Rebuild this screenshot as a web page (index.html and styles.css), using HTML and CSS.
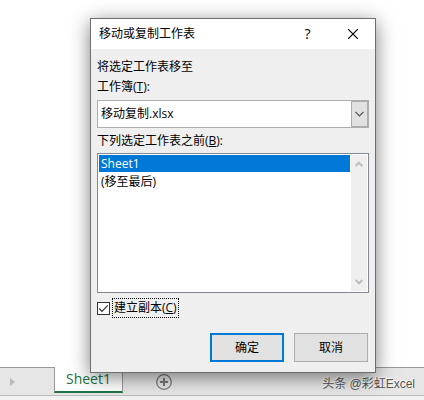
FILE: index.html
```
<!DOCTYPE html>
<html lang="zh-CN">
<head>
    <meta charset="UTF-8">
    <meta name="viewport" content="width=device-width, initial-scale=1.0">
    <title>移动或复制工作表</title>
    <link rel="stylesheet" href="styles.css">
</head>
<body>
    <div class="sheet"></div>
    <div class="tabs">
        <svg class="tab-arrow" width="5" height="8" viewBox="0 0 5 8"><path d="M0 0L5 4L0 8Z" fill="#b9b9b9"/></svg>
        <button class="tab">Sheet1</button>
        <button class="add" aria-label="新工作表">
            <svg width="16" height="16" viewBox="0 0 16 16" fill="none" stroke="#777">
                <circle cx="8" cy="8" r="7.3" stroke-width="1.2"/>
                <path d="M8 4V12M4 8H12" stroke-width="2"/>
            </svg>
        </button>
        <span class="credit">头条 @彩虹Excel</span>
    </div>
    <div class="status"></div>

    <form class="dialog" role="dialog" aria-labelledby="title">
        <div class="titlebar">
            <span class="title" id="title">移动或复制工作表</span>
            <button type="button" class="caption" aria-label="帮助">?</button>
            <button type="button" class="caption" aria-label="关闭">
                <svg width="10" height="10" viewBox="0 0 10 10"><path d="M0 0L10 10M10 0L0 10" stroke="#000" stroke-width="1.2"/></svg>
            </button>
        </div>
        <div class="content">
            <div class="line">将选定工作表移至</div>
            <label class="line" for="book">工作簿(<u>T</u>):</label>
            <div class="combo">
                <select id="book">
                    <option>移动复制.xlsx</option>
                </select>
                <span class="drop">
                    <svg width="9" height="6" viewBox="0 0 9 6" fill="none" stroke="#505050" stroke-width="1.2"><path d="M0.5 0.8L4.5 4.8L8.5 0.8"/></svg>
                </span>
            </div>
            <label class="line before" for="before">下列选定工作表之前(<u>B</u>):</label>
            <div class="list">
                <select id="before" size="8">
                    <option selected>Sheet1</option>
                    <option>(移至最后)</option>
                </select>
                <div class="scrollbar">
                    <svg width="8" height="6" viewBox="0 0 8 6" fill="none" stroke="#bdbdbd" stroke-width="2"><path d="M0.7 5L4 1.7L7.3 5"/></svg>
                    <svg width="8" height="6" viewBox="0 0 8 6" fill="none" stroke="#bdbdbd" stroke-width="2"><path d="M0.7 1L4 4.3L7.3 1"/></svg>
                </div>
            </div>
            <div class="check">
                <input type="checkbox" id="copy" checked>
                <svg class="tick" width="13" height="13" viewBox="0 0 13 13" fill="none" stroke="#333" stroke-width="1.2"><path d="M2.3 6.5L5 9.3L10.7 3.3"/></svg>
                <label for="copy">建立副本(<u>C</u>)</label>
            </div>
            <div class="buttons">
                <button type="button" class="btn primary">确定</button>
                <button type="button" class="btn">取消</button>
            </div>
        </div>
    </form>
</body>
</html>
```
FILE: styles.css
```
* {
    box-sizing: border-box;
}
body {
    display: flex;
    flex-direction: column;
    height: 100vh;
    margin: 0;
    position: relative;
    overflow: hidden;
    background-color: #fff;
    color: #000;
    font-family: "Open Sans", "Noto Sans CJK SC", sans-serif;
    font-size: 12px;
    line-height: 20px;
}
button, select, input {
    font: inherit;
    color: inherit;
    margin: 0;
    padding: 0;
    border-radius: 0;
}
select, input {
    appearance: none;
    outline: none;
}
svg {
    display: block;
}
.sheet {
    flex: 1;
}
.tabs {
    display: flex;
    align-items: center;
    height: 28px;
    background-color: #e6e6e6;
    border-top: 1px solid #999;
}
.tab-arrow {
    margin: 0 39px 0 10px;
}
.tab {
    align-self: flex-start;
    width: 69px;
    height: 26px;
    margin-top: -1px;
    background-color: #fff;
    border: 1px solid #999;
    border-width: 0 1px 2px;
    border-bottom-color: #217346;
    color: #217346;
    font-size: 14px;
}
.add {
    margin-left: 33px;
    border: none;
    background: none;
}
.credit {
    margin-left: auto;
    margin-right: 9px;
    padding-top: 4px;
    color: #555;
    font-family: "Liberation Sans", "Noto Sans CJK SC", sans-serif;
    text-shadow: -1px -1px 0 #fff;
}
.status {
    height: 5px;
    background-color: #f1f1f1;
    border-top: 1px solid #bbb;
}
.dialog {
    position: absolute;
    left: 90px;
    top: 18px;
    width: 286px;
    background-color: #efefef;
    border: 1px solid #6e6e6e;
    box-shadow: 0 4px 18px rgba(0, 0, 0, 0.5);
}
.titlebar {
    display: flex;
    align-items: center;
    height: 30px;
    padding-left: 8px;
    background-color: #fff;
}
.title {
    flex: 1;
}
.caption {
    display: flex;
    align-items: center;
    justify-content: center;
    width: 45px;
    height: 28px;
    border: none;
    background: none;
    font-size: 14px;
}
.content {
    padding: 8px 6px 10px;
}
.line {
    display: block;
}
.before {
    margin-top: 3px;
}
.combo {
    display: flex;
    height: 28px;
    margin-top: 3px;
    background-color: #fff;
    border: 1px solid #adadad;
}
.combo select {
    flex: 1;
    padding-left: 3px;
    border: none;
    background: none;
}
.drop {
    display: flex;
    align-items: center;
    justify-content: center;
    width: 17px;
    background-color: #e1e1e1;
    border: 1px solid #adadad;
}
.list {
    display: flex;
    height: 140px;
    margin-top: 2px;
    padding: 1px;
    background-color: #fff;
    border: 1px solid #828790;
}
.list select {
    flex: 1;
    border: none;
    background: none;
    overflow: hidden;
}
.list option {
    height: 17px;
    min-height: 17px;
    padding: 0 2px;
    line-height: 17px;
}
.list option:checked {
    background: #0078d7 linear-gradient(#0078d7, #0078d7);
    color: #fff;
}
.scrollbar {
    display: flex;
    flex-direction: column;
    align-items: center;
    justify-content: space-between;
    width: 16px;
    margin-left: 1px;
    padding: 6px 0;
    background-color: #efefef;
}
.check {
    display: flex;
    align-items: center;
    position: relative;
    margin-top: 5px;
}
.check input {
    width: 13px;
    height: 13px;
    background-color: #fff;
    border: 1px solid #333;
}
.tick {
    position: absolute;
    left: 0;
    visibility: hidden;
    pointer-events: none;
}
.check input:checked + .tick {
    visibility: visible;
}
.check label {
    margin-left: 2px;
    padding: 0 1px;
    border: 1px dotted #000;
    line-height: 18px;
}
.buttons {
    display: flex;
    justify-content: flex-end;
    gap: 10px;
    margin-top: 15px;
    padding-right: 1px;
}
.btn {
    width: 74px;
    height: 29px;
    background-color: #e1e1e1;
    border: 1px solid #adadad;
}
.primary {
    border: 2px solid #0078d7;
}
```
